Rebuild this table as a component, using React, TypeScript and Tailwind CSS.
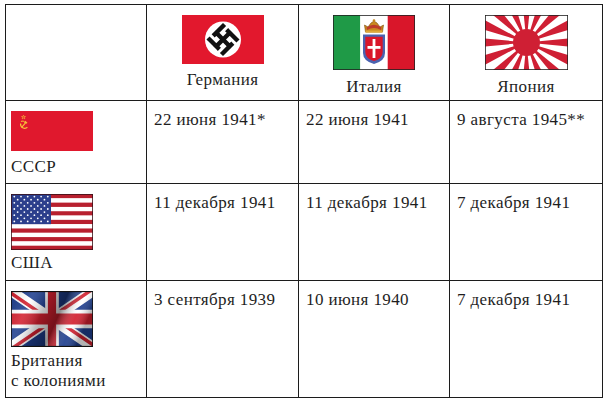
import React from "react";

const GermanyFlag = () => {
  const s = 9.5;
  return (
    <svg width="82" height="49" viewBox="0 0 82 49">
      <rect width="82" height="49" fill="#e2182d" />
      <circle cx="41" cy="24.5" r="18" fill="#fff" />
      <g transform="translate(41 24.5) rotate(45)">
        <path
          d={`M0 ${-s} V${s} M${-s} 0 H${s} M${-2.2} ${-s} H${s} M${s} ${-2.2} V${s} M${2.2} ${s} H${-s} M${-s} ${2.2} V${-s}`}
          stroke="#111"
          strokeWidth="4.4"
          fill="none"
          strokeLinecap="square"
        />
      </g>
    </svg>
  );
};

const ItalyFlag = () => (
  <svg width="82" height="55" viewBox="0 0 82 55">
    <rect width="27.3" height="55" fill="#1f9a47" />
    <rect x="27.3" width="27.4" height="55" fill="#fff" />
    <rect x="54.7" width="27.3" height="55" fill="#d9162a" />
    {/* crown */}
    <path d="M32.5 17 L31.5 10 L35 12 L38 8 L41 6 L44 8 L47 12 L50.5 10 L49.5 17 Z" fill="#c9891f" stroke="#7a4a0c" strokeWidth="0.6" />
    <path d="M33.5 12.5 Q41 7 48.5 12.5 L48 15 Q41 11 34 15 Z" fill="#b8222e" opacity="0.75" />
    <rect x="32.5" y="15.5" width="17" height="2.2" fill="#e0a93a" />
    <circle cx="41" cy="5.5" r="1.3" fill="#c9891f" />
    {/* shield */}
    <path d="M30 19.5 H52 V38 Q52 46 41 49 Q30 46 30 38 Z" fill="#4a63b0" />
    <path d="M32.3 21.8 H49.7 V37 Q49.7 43.5 41 46 Q32.3 43.5 32.3 37 Z" fill="#d9162a" />
    <rect x="39.6" y="24" width="2.8" height="19" fill="#fff" />
    <rect x="34.5" y="31" width="13" height="2.8" fill="#fff" />
    <rect x="0.4" y="0.4" width="81.2" height="54.2" fill="none" stroke="#222" strokeWidth="0.8" />
  </svg>
);

const JapanFlag = () => {
  const cx = 41.5;
  const cy = 27.5;
  const R = 110;
  const h = (5.625 * Math.PI) / 180;
  const rays = Array.from({ length: 16 }, (_, i) => {
    const a = (i * 22.5 * Math.PI) / 180;
    const p1 = `${cx + R * Math.sin(a - h)},${cy - R * Math.cos(a - h)}`;
    const p2 = `${cx + R * Math.sin(a + h)},${cy - R * Math.cos(a + h)}`;
    return `${cx},${cy} ${p1} ${p2}`;
  });
  return (
    <svg width="83" height="55" viewBox="0 0 83 55">
      <defs>
        <clipPath id="jp">
          <rect width="83" height="55" />
        </clipPath>
      </defs>
      <rect width="83" height="55" fill="#fff" />
      <g clipPath="url(#jp)">
        {rays.map((p, i) => (
          <polygon key={i} points={p} fill="#cf1f34" />
        ))}
      </g>
      <circle cx={cx} cy={cy} r="13.5" fill="#cf1f34" />
      <rect x="0.4" y="0.4" width="82.2" height="54.2" fill="none" stroke="#222" strokeWidth="0.8" />
    </svg>
  );
};

const UssrFlag = () => (
  <svg width="82" height="40" viewBox="0 0 82 40">
    <rect width="82" height="40" fill="#e0182d" />
    <path d="M12.5 4.2 L13 5.6 L14.5 5.6 L13.3 6.5 L13.8 7.9 L12.5 7 L11.2 7.9 L11.7 6.5 L10.5 5.6 L12 5.6 Z" fill="none" stroke="#f6c33a" strokeWidth="0.6" />
    <path d="M9.6 12.5 A4.2 4.2 0 0 0 16.4 16.3" stroke="#f6c33a" strokeWidth="1.2" fill="none" />
    <path d="M9.9 10.4 Q12.8 8.8 14.3 12" stroke="#f6c33a" strokeWidth="1" fill="none" />
    <path d="M10.6 16.4 L15.2 11.2" stroke="#f6c33a" strokeWidth="1.1" />
    <path d="M13.8 10.4 L16 12.2" stroke="#f6c33a" strokeWidth="1.4" />
  </svg>
);

const UsaFlag = () => {
  const sh = 56 / 13;
  const stars: [number, number][] = [];
  for (let r = 0; r < 9; r++) {
    const n = r % 2 === 0 ? 6 : 5;
    for (let c = 0; c < n; c++) {
      const x = r % 2 === 0 ? 3.3 + c * 6.7 : 6.65 + c * 6.7;
      stars.push([x, 2.6 + r * 3.1]);
    }
  }
  return (
    <svg width="82" height="56" viewBox="0 0 82 56">
      {Array.from({ length: 13 }, (_, i) => (
        <rect key={i} y={i * sh} width="82" height={sh + 0.1} fill={i % 2 === 0 ? "#b8202f" : "#fff"} />
      ))}
      <rect width="40" height={sh * 7} fill="#2c3f8c" />
      {stars.map(([x, y], i) => (
        <circle key={i} cx={x} cy={y} r="0.9" fill="#fff" />
      ))}
      <rect x="0.4" y="0.4" width="81.2" height="55.2" fill="none" stroke="#3a1218" strokeWidth="0.8" />
    </svg>
  );
};

const UkFlag = () => (
  <svg width="82" height="56" viewBox="0 0 60 30" preserveAspectRatio="none">
    <defs>
      <clipPath id="uks">
        <path d="M0,0 v30 h60 v-30 z" />
      </clipPath>
      <clipPath id="ukt">
        <path d="M30,15 h30 v15 z v15 h-30 z h-30 v-15 z v-15 h30 z" />
      </clipPath>
      <linearGradient id="ukw" x1="0" y1="0" x2="1" y2="0.3">
        <stop offset="0" stopColor="#000" stopOpacity="0.1" />
        <stop offset="0.25" stopColor="#fff" stopOpacity="0.12" />
        <stop offset="0.45" stopColor="#000" stopOpacity="0.25" />
        <stop offset="0.65" stopColor="#000" stopOpacity="0.45" />
        <stop offset="0.85" stopColor="#fff" stopOpacity="0.08" />
        <stop offset="1" stopColor="#000" stopOpacity="0.3" />
      </linearGradient>
    </defs>
    <g clipPath="url(#uks)">
      <path d="M0,0 v30 h60 v-30 z" fill="#1f3f8f" />
      <path d="M0,0 L60,30 M60,0 L0,30" stroke="#fff" strokeWidth="6" />
      <path d="M0,0 L60,30 M60,0 L0,30" clipPath="url(#ukt)" stroke="#d3202f" strokeWidth="4" />
      <path d="M30,0 v30 M0,15 h60" stroke="#fff" strokeWidth="10" />
      <path d="M30,0 v30 M0,15 h60" stroke="#d3202f" strokeWidth="6" />
      <rect width="60" height="30" fill="url(#ukw)" />
    </g>
    <rect x="0.3" y="0.3" width="59.4" height="29.4" fill="none" stroke="#111" strokeWidth="0.6" />
  </svg>
);

const header = [
  { name: "Германия", flag: <GermanyFlag />, gap: "mt-[6px]" },
  { name: "Италия", flag: <ItalyFlag />, gap: "mt-[7px]" },
  { name: "Япония", flag: <JapanFlag />, gap: "mt-[7px]" },
];

const rows = [
  {
    flag: <UssrFlag />,
    label: ["СССР"],
    dates: ["22 июня 1941*", "22 июня 1941", "9 августа 1945**"],
    h: "h-[83px]",
    gap: "mt-[6px]",
  },
  {
    flag: <UsaFlag />,
    label: ["США"],
    dates: ["11 декабря 1941", "11 декабря 1941", "7 декабря 1941"],
    h: "h-[97px]",
    gap: "mt-[3px]",
  },
  {
    flag: <UkFlag />,
    label: ["Британия", "с колониями"],
    dates: ["3 сентября 1939", "10 июня 1940", "7 декабря 1941"],
    h: "h-[117px]",
    gap: "mt-[4px]",
  },
];

const cell = "border-[1.5px] border-[#1c1c1c] align-top p-0";

export default function App() {
  return (
    <div className="bg-white w-[606px] h-[401px] pt-[4px] pl-[5px]">
      <table className="table-fixed border-collapse w-[597px] text-[#1e1e1e] text-[17px] leading-[20px] tracking-[0.4px] [font-family:'Liberation_Serif','DejaVu_Serif',serif]">
        <colgroup>
          <col className="w-[141px]" />
          <col className="w-[152px]" />
          <col className="w-[151px]" />
          <col className="w-[153px]" />
        </colgroup>
        <tbody>
          <tr className="h-[96px]">
            <td className={cell} />
            {header.map((c) => (
              <td key={c.name} className={cell}>
                <div className="flex flex-col items-center pt-[10px]">
                  {c.flag}
                  <div className={c.gap}>{c.name}</div>
                </div>
              </td>
            ))}
          </tr>
          {rows.map((r) => (
            <tr key={r.label[0]} className={r.h}>
              <td className={cell}>
                <div className="pt-[10px] pl-[5px] flex flex-col items-start">
                  {r.flag}
                  <div className={r.gap}>
                    {r.label.map((l) => (
                      <div key={l}>{l}</div>
                    ))}
                  </div>
                </div>
              </td>
              {r.dates.map((d, i) => (
                <td key={i} className={cell}>
                  <div className="pt-[9px] pl-[7px] whitespace-nowrap">{d}</div>
                </td>
              ))}
            </tr>
          ))}
        </tbody>
      </table>
    </div>
  );
}
